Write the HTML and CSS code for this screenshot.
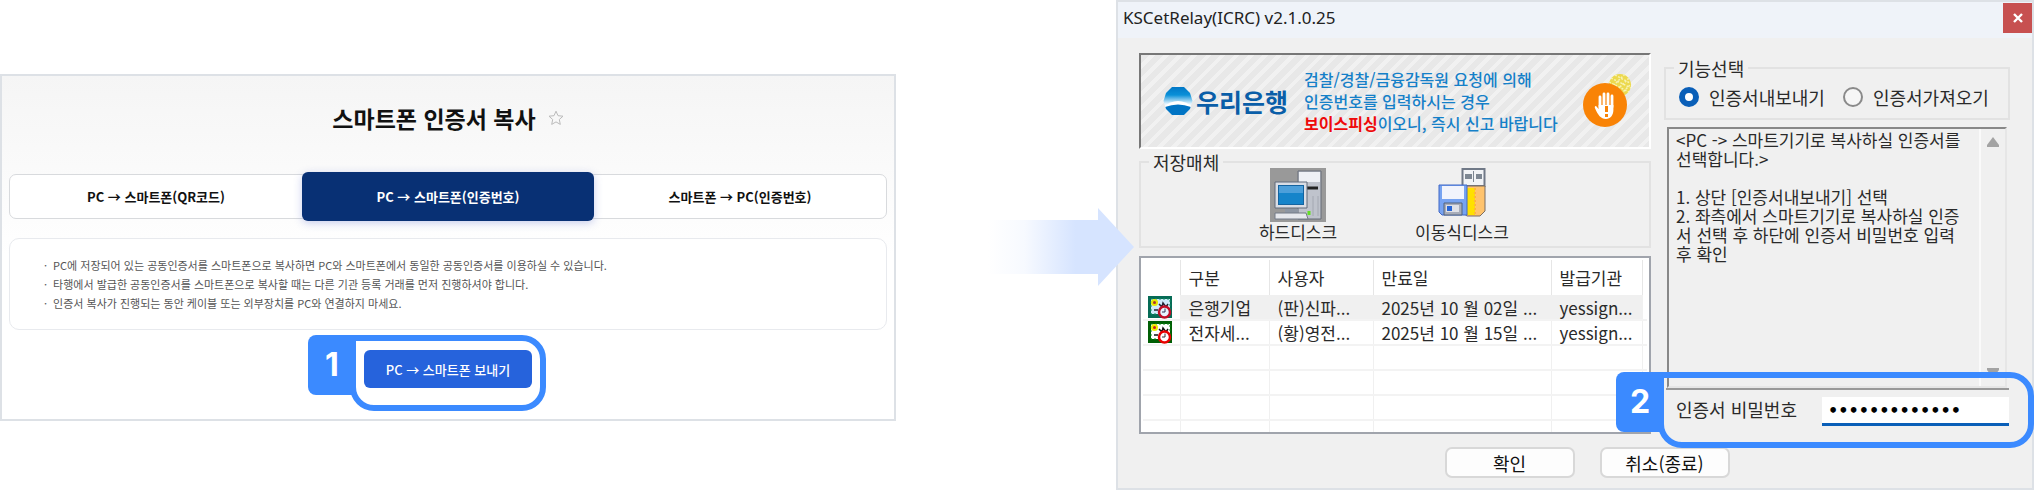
FILE: index.html
```html
<!DOCTYPE html>
<html lang="ko">
<head>
<meta charset="utf-8">
<title>스마트폰 인증서 복사</title>
<link rel="stylesheet" href="styles.css">
</head>
<body>
<main class="guide">
  <section class="web">
    <header class="web-head">
      <h1 class="web-title">스마트폰 인증서 복사</h1>
      <button class="star" aria-label="즐겨찾기">
        <svg viewBox="0 0 16 16" width="16" height="16"><path d="M8 1.2l2 4.500 5 .5-3.700 3.300 1 4.900L8 11.900l-4.300 2.500 1-4.900L1 6.200l5-.5z" fill="none" stroke="#bbb" stroke-linejoin="round"/></svg>
      </button>
    </header>
    <nav class="tabs">
      <button class="tab">PC → 스마트폰(QR코드)</button>
      <button class="tab tab-on">PC → 스마트폰(인증번호)</button>
      <button class="tab">스마트폰 → PC(인증번호)</button>
    </nav>
    <ul class="notes">
      <li>PC에 저장되어 있는 공동인증서를 스마트폰으로 복사하면 PC와 스마트폰에서 동일한 공동인증서를 이용하실 수 있습니다.</li>
      <li>타행에서 발급한 공동인증서를 스마트폰으로 복사할 때는 다른 기관 등록 거래를 먼저 진행하셔야 합니다.</li>
      <li>인증서 복사가 진행되는 동안 케이블 또는 외부장치를 PC와 연결하지 마세요.</li>
    </ul>
    <div class="send-row">
      <div class="send-wrap">
        <button class="send">PC → 스마트폰 보내기</button>
        <span class="ring ring-send"></span>
        <b class="badge badge-send">1</b>
      </div>
    </div>
  </section>

  <div class="gap">
    <svg class="arrow" viewBox="0 0 146 78" width="146" height="78">
      <defs><linearGradient id="fade"><stop offset="0" stop-color="#d6e4ff" stop-opacity="0"/><stop offset=".25" stop-color="#d6e4ff" stop-opacity=".2"/><stop offset=".6" stop-color="#d6e4ff"/></linearGradient></defs>
      <path d="M0 12h110V0l36 39-36 39V66H0z" fill="url(#fade)"/>
    </svg>
  </div>

  <section class="win">
    <header class="win-bar">
      <h2 class="win-title">KSCetRelay(ICRC) v2.1.0.25</h2>
      <button class="close" aria-label="닫기">
        <svg viewBox="0 0 10 10" width="10" height="10"><path d="M1 1l8 8M9 1L1 9" stroke="#fff" stroke-width="2.400"/></svg>
      </button>
    </header>
    <div class="win-body">
      <div class="col-left">
        <div class="banner">
          <svg class="ci" viewBox="0 0 30 30" width="30" height="30">
            <defs>
              <linearGradient id="sky" x2="0" y2="1"><stop offset="0" stop-color="#0074c4"/><stop offset=".3" stop-color="#0a90d8"/><stop offset=".6" stop-color="#e8f6ff"/></linearGradient>
              <clipPath id="disc"><path d="M9 1h12l6 6 2.500 8-2.500 8-6 6H9l-6-6L.5 15 3 7z"/></clipPath>
            </defs>
            <g clip-path="url(#disc)"><path d="M0 0h30v30H0z" fill="url(#sky)"/><path d="M0 21q15-12 30 0v3H0z" fill="#fff"/><path d="M2 21q13-5 26 0v9H2z" fill="#0074c4"/></g>
          </svg>
          <strong class="bank">우리은행</strong>
          <p class="warn">검찰/경찰/금융감독원 요청에 의해<br>인증번호를 입력하시는 경우<br><em>보이스피싱</em>이오니, 즉시 신고 바랍니다</p>
          <svg class="hand" viewBox="0 0 50 54" width="50" height="54">
            <circle cx="37" cy="11" r="11" fill="#ecd94e"/>
            <path d="M26 8l20 10M28 4l20 10M32 1l15 8M28 14L42 0M32 18L46 4M38 20l10-10" stroke="#f7f2b4" stroke-width="1.500" stroke-dasharray="2 1.500"/>
            <circle cx="22" cy="31" r="22" fill="#f98306"/>
            <path d="M17 33V23M21 32V20M25 32V20M29 33v-11" stroke="#fff" stroke-width="2.800" stroke-linecap="round"/>
            <path d="M15.600 31h14.800v5c0 5-3 9-7.500 9-5 0-8-4-11-11-.5-2 1-3 2-1l1.700 2z" fill="#fff"/>
            <path d="M23.500 32v6M23.500 40v3" stroke="#f98306" stroke-width="3"/>
          </svg>
        </div>
        <fieldset class="group media">
          <legend>저장매체</legend>
          <div class="disks">
          <button class="disk">
            <svg viewBox="0 0 56 54" width="56" height="54">
              <path d="M0 0h56v54H0z" fill="#999"/>
              <path d="M28 3h23v48H28z" fill="#bfc3cc" stroke="#666d78"/><path d="M29 4h21v10H29z" fill="#eef0f5"/><path d="M36 20h12" stroke="#222" stroke-width="3"/><path d="M43 28v20M48 28v20" stroke="#a4a8b2"/>
              <path d="M5 14h32v26H5z" fill="#d9dde5" stroke="#606b7a"/><path d="M8 17h26v20H8z" fill="#15639f"/><path d="M9 18h24v7H9z" fill="#4d9fda"/><path d="M9 25h24v11H9z" fill="#1684ca"/>
              <path d="M15 41h13v4H15z" fill="#8d96a3"/><path d="M5 45h31l2 6H5z" fill="#e6e8ed" stroke="#737b87"/><path d="M39 43v4" stroke="#63df25" stroke-width="3"/>
            </svg>
            <span>하드디스크</span>
          </button>
          <button class="disk">
            <svg viewBox="0 0 48 54" width="48" height="54">
              <path d="M24.500 1h22v17h-22z" fill="#f1f3f6" stroke="#707987" stroke-width="2"/><path d="M27 6h7v5h-7zM38 6h6v5h-6z" fill="#7d8793"/><path d="M35.500 3v11" stroke="#7d8793"/>
              <path d="M24 18h23v25l-5 5H29l-5-4z" fill="#ffc36d" stroke="#7b6d62"/><path d="M29 20h8v27h-8z" fill="#ffe000"/><path d="M37 20v27" stroke="#ffb53d" stroke-width="2" stroke-dasharray="2 2"/>
              <path d="M1 17h28v30H4l-3-3z" fill="#77a3f1" stroke="#4169c7"/><path d="M4 18h22v13H4z" fill="#f2f4fc"/><path d="M6 35h18v12H6z" fill="#a8adb9" stroke="#50637f"/><path d="M8 37h13v7H8z" fill="#dfe1e7"/><path d="M9 38h5v5H9z" fill="#2766d7"/>
            </svg>
            <span>이동식디스크</span>
          </button>
          </div>
        </fieldset>
        <div class="list">
          <table class="certs">
            <colgroup><col class="c-icon"><col class="c-kind"><col class="c-user"><col class="c-date"><col class="c-org"><col class="c-rest"></colgroup>
            <thead><tr><th></th><th>구분</th><th>사용자</th><th>만료일</th><th>발급기관</th><th></th></tr></thead>
            <tbody>
              <tr class="picked"><td><svg class="cert" viewBox="0 0 24 23" width="24" height="23"><use href="#cert-a"/></svg></td><td>은행기업</td><td>(판)신파...</td><td>2025년 10 월 02일 ...</td><td>yessign...</td><td></td></tr>
              <tr><td><svg class="cert" viewBox="0 0 24 23" width="24" height="23"><use href="#cert-b"/></svg></td><td>전자세...</td><td>(황)영전...</td><td>2025년 10 월 15일 ...</td><td>yessign...</td><td></td></tr>
              <tr><td></td><td></td><td></td><td></td><td></td><td></td></tr>
              <tr><td></td><td></td><td></td><td></td><td></td><td></td></tr>
              <tr><td></td><td></td><td></td><td></td><td></td><td></td></tr>
              <tr><td></td><td></td><td></td><td></td><td></td><td></td></tr>
            </tbody>
          </table>
        </div>
      </div>
      <div class="col-right">
        <fieldset class="group mode">
          <legend>기능선택</legend>
          <div class="opts">
            <label class="opt"><input type="radio" name="mode" checked>인증서내보내기</label>
            <label class="opt"><input type="radio" name="mode">인증서가져오기</label>
          </div>
        </fieldset>
        <div class="help">
          <p class="help-text">&lt;PC -&gt; 스마트기기로 복사하실 인증서를<br>선택합니다.&gt;<br><br>1. 상단 [인증서내보내기] 선택<br>2. 좌측에서 스마트기기로 복사하실 인증<br>서 선택 후 하단에 인증서 비밀번호 입력<br>후 확인</p>
          <div class="scroll">
            <svg viewBox="0 0 12 10" width="12" height="10"><path d="M6 0l6 8v2H0V8z" fill="#a3a3a3"/></svg>
            <svg viewBox="0 0 12 10" width="12" height="10"><path d="M0 0h12v2L6 10 0 2z" fill="#a3a3a3"/></svg>
          </div>
        </div>
        <div class="pw">
          <label for="pw">인증서 비밀번호</label>
          <input id="pw" type="password" value="abcdefghijklm">
          <span class="ring ring-pw"></span>
          <b class="badge badge-pw">2</b>
        </div>
      </div>
    </div>
    <footer class="win-foot">
      <button class="cmd">확인</button>
      <button class="cmd">취소(종료)</button>
    </footer>
  </section>
</main>
<svg class="defs" width="0" height="0">
  <g id="cert-a"><path d="M0 0h24v22H0z" fill="#066b56"/><path d="M3 3h19v15H3z" fill="#cfe9fb"/><path d="M3 3h19v15H3z" fill="none" stroke="#0f9362" stroke-dasharray="2 2"/><circle cx="6.500" cy="6.500" r="3.500" fill="#e8e800"/><circle cx="6.500" cy="6.500" r="1.500" fill="#a33"/><path d="M11 8l3 3 1-4 3 4 2-3M6 14h4" stroke="#223" fill="none" stroke-width="1.500"/><circle cx="16.500" cy="16" r="5.500" fill="#e7f4ff" stroke="#c00d27" stroke-width="2.500"/><path d="M17 12.500V16h-3" stroke="#335" fill="none"/></g>
  <g id="cert-b"><path d="M0 0h24v22H0z" fill="#005f05"/><path d="M3 3h19v15H3z" fill="#fff"/><path d="M3 3h19v15H3z" fill="none" stroke="#0a8a12" stroke-dasharray="2 2"/><circle cx="6.500" cy="6.500" r="3.500" fill="#f0ef00"/><circle cx="6.500" cy="6.500" r="1.500" fill="#c22"/><path d="M11 8l3 3 1-4 3 4 2-3M6 14h4" stroke="#111" fill="none" stroke-width="1.500"/><circle cx="16.500" cy="16" r="5.500" fill="#fff" stroke="#e90000" stroke-width="2.500"/><path d="M17 12.500V16h-3" stroke="#333" fill="none"/></g>
</svg>
</body>
</html>
```
FILE: styles.css
```css
* { box-sizing: border-box; }
body { margin: 0; background: #fff; font-family: "Noto Sans CJK KR", sans-serif; color: #111; }
button, input { font: inherit; color: inherit; margin: 0; }
button { padding: 0; border: 0; background: none; white-space: nowrap; }
h1, h2, p, ul, fieldset { margin: 0; padding: 0; font-weight: inherit; }
.defs { position: absolute; }

.guide { display: grid; grid-template-columns: minmax(0, 896fr) minmax(0, 220fr) minmax(0, 918fr); align-items: start; }
.web { margin-top: 74px; padding: 0 7px 31px; border: 2px solid #dde1e6; background: linear-gradient(#f5f5f5, #fff 180px); }
.gap { display: flex; justify-content: flex-end; padding-top: 208px; }
.arrow { flex: none; margin-right: -18px; position: relative; z-index: 2; }
.win { border: 2px solid #dde1e6; background: #f0f0f0; }

.web-head { display: flex; justify-content: center; align-items: center; gap: 12px; height: 84px; margin-bottom: 14px; }
.web-title { font-size: 23px; line-height: 32px; font-weight: 700; }
.star { display: flex; }
.tabs { display: grid; grid-template-columns: repeat(3, 1fr); height: 45px; border: 1px solid #d8dadd; border-radius: 7px; background: #fff; font-size: 13px; font-weight: 700; }
.tab-on { margin: -3px 0; border-radius: 6px; background: #083074; color: #fff; box-shadow: 0 2px 8px #5064c850; }
.notes { list-style: none; margin-top: 19px; padding: 17px 34px 16px; border: 1px solid #e8eaee; border-radius: 10px; background: #fff; font-size: 11px; line-height: 19px; color: #555; }
.notes li::before { content: "·"; margin-right: 6px; }
.send-row { display: flex; justify-content: center; margin-top: 20px; }
.send-wrap { position: relative; }
.send { display: block; width: 168px; height: 38px; border-radius: 6px; background: #2663dc; color: #fff; font-size: 13px; font-weight: 500; }

.ring { position: absolute; border: 6px solid #3b8aff; border-radius: 0 24px 24px 24px; pointer-events: none; }
.badge { position: absolute; display: flex; align-items: center; justify-content: center; width: 48px; height: 60px; border-radius: 8px 0 0 8px; background: #3b8aff; color: #fff; font: 700 32px/1 Inter, sans-serif; }
.ring-send { inset: -15px -14px -23px -14px; }
.badge-send { left: -56px; top: -15px; }

.win-bar { display: flex; justify-content: space-between; align-items: flex-start; height: 36px; padding-top: 1px; background: #eff3f9; }
.win-title { padding-left: 5px; font: 17px/30px "Noto Sans", sans-serif; color: #222; }
.close { display: flex; align-items: center; justify-content: center; width: 29px; height: 30px; background: #c75050; }
.win-body { display: grid; grid-template-columns: minmax(0, 512fr) minmax(0, 346fr); gap: 13px; padding: 15px 22px 0 21px; font-size: 17px; color: #2a2a2a; }

.banner { display: flex; align-items: center; height: 96px; padding: 0 16px 0 22px; border: 2px solid; border-color: #777 #fff #fff #777; background: repeating-linear-gradient(135deg, #e8e8e8 0 6px, #f1f1f1 6px 10px); color: #1580c8; }
.ci { flex: none; }
.bank { margin-left: 3px; font-size: 25px; line-height: 30px; color: #0a5ea8; font-weight: 700; white-space: nowrap; }
.warn { margin-left: 16px; font-size: 16px; line-height: 22px; font-weight: 500; white-space: nowrap; }
.warn em { font-style: normal; font-weight: 700; color: #ee0a0a; }
.hand { flex: none; margin-left: auto; }
.group { min-width: 0; border: 2px solid #e2e2e2; }
.group legend { height: 12px; margin-left: 8px; padding: 0 4px; font-size: 18px; line-height: 12px; }
.media { height: 92px; margin-top: 7px; }
.disks { display: flex; gap: 72px; padding-left: 112px; }
.disk { display: flex; flex-direction: column; align-items: center; min-width: 90px; }
.disk span { line-height: 20px; }

.list { height: 178px; margin-top: 8px; border: 2px solid #a0a4ac; background: #fff; padding: 2px; overflow: hidden; }
.certs { width: 100%; table-layout: fixed; border-collapse: collapse; }
.c-icon { width: 37px; }
.c-kind { width: 89px; }
.c-user { width: 104px; }
.c-date { width: 178px; }
.c-org { width: 91px; }
.certs th { height: 35px; padding: 0 8px; text-align: left; font-weight: 400; border-right: 1px solid #e6e6e6; }
.certs td { height: 25px; padding: 0 8px; border-right: 1px solid #f0f0f0; border-bottom: 2px solid #f3f3f3; line-height: 23px; white-space: nowrap; }
.certs td:first-child { padding: 0 0 0 5px; }
.certs th:last-child, .certs td:last-child { border-right: 0; padding: 0; }
.cert { display: block; }
.picked td { background: #f0f0f0; }
.picked td:first-child, .picked td:last-child { background: #fff; }

.col-right { font-size: 18px; }
.mode { height: 58px; margin-top: 9px; }
.opts { display: flex; gap: 18px; padding: 11px 0 0 13px; }
.opt { display: flex; align-items: center; gap: 10px; line-height: 24px; white-space: nowrap; }
.opt input { appearance: none; flex: none; width: 20px; height: 20px; border: 2px solid #8a8a8a; border-radius: 50%; background: #f6f6f6; }
.opt input:checked { border: 6px solid #0a5fb8; background: #fff; }
.help { display: flex; height: 261px; margin: 7px 3px 0; border: 2px solid; border-color: #888 #e6e6e6 #e6e6e6 #888; }
.help-text { flex: 1; padding: 1px 0 0 7px; font-size: 17px; line-height: 19px; white-space: nowrap; }
.scroll { display: flex; flex-direction: column; justify-content: space-between; align-items: center; width: 26px; padding: 8px 0; border-left: 2px solid #fafafa; }
.pw { position: relative; display: flex; justify-content: space-between; margin: 0 1px 0 2px; padding: 7px 0 0 10px; border-top: 2px solid #999; line-height: 24px; }
.pw input { width: 187px; height: 29px; padding: 0 6px; border: 0; border-bottom: 3px solid #0a5fb8; outline: 0; background: #fff; color: #000; font: 700 16px/24px "DejaVu Sans", sans-serif; }
.ring-pw { inset: -18px -25px -22px -8px; }
.badge-pw { left: -50px; top: -18px; }
.win-foot { display: flex; justify-content: center; gap: 25px; margin-top: 13px; padding: 0 0 10px 24px; }
.cmd { width: 130px; height: 31px; border: 2px solid #d8d8d8; border-radius: 7px; background: #fdfdfd; font-size: 18px; line-height: 26px; }
```
